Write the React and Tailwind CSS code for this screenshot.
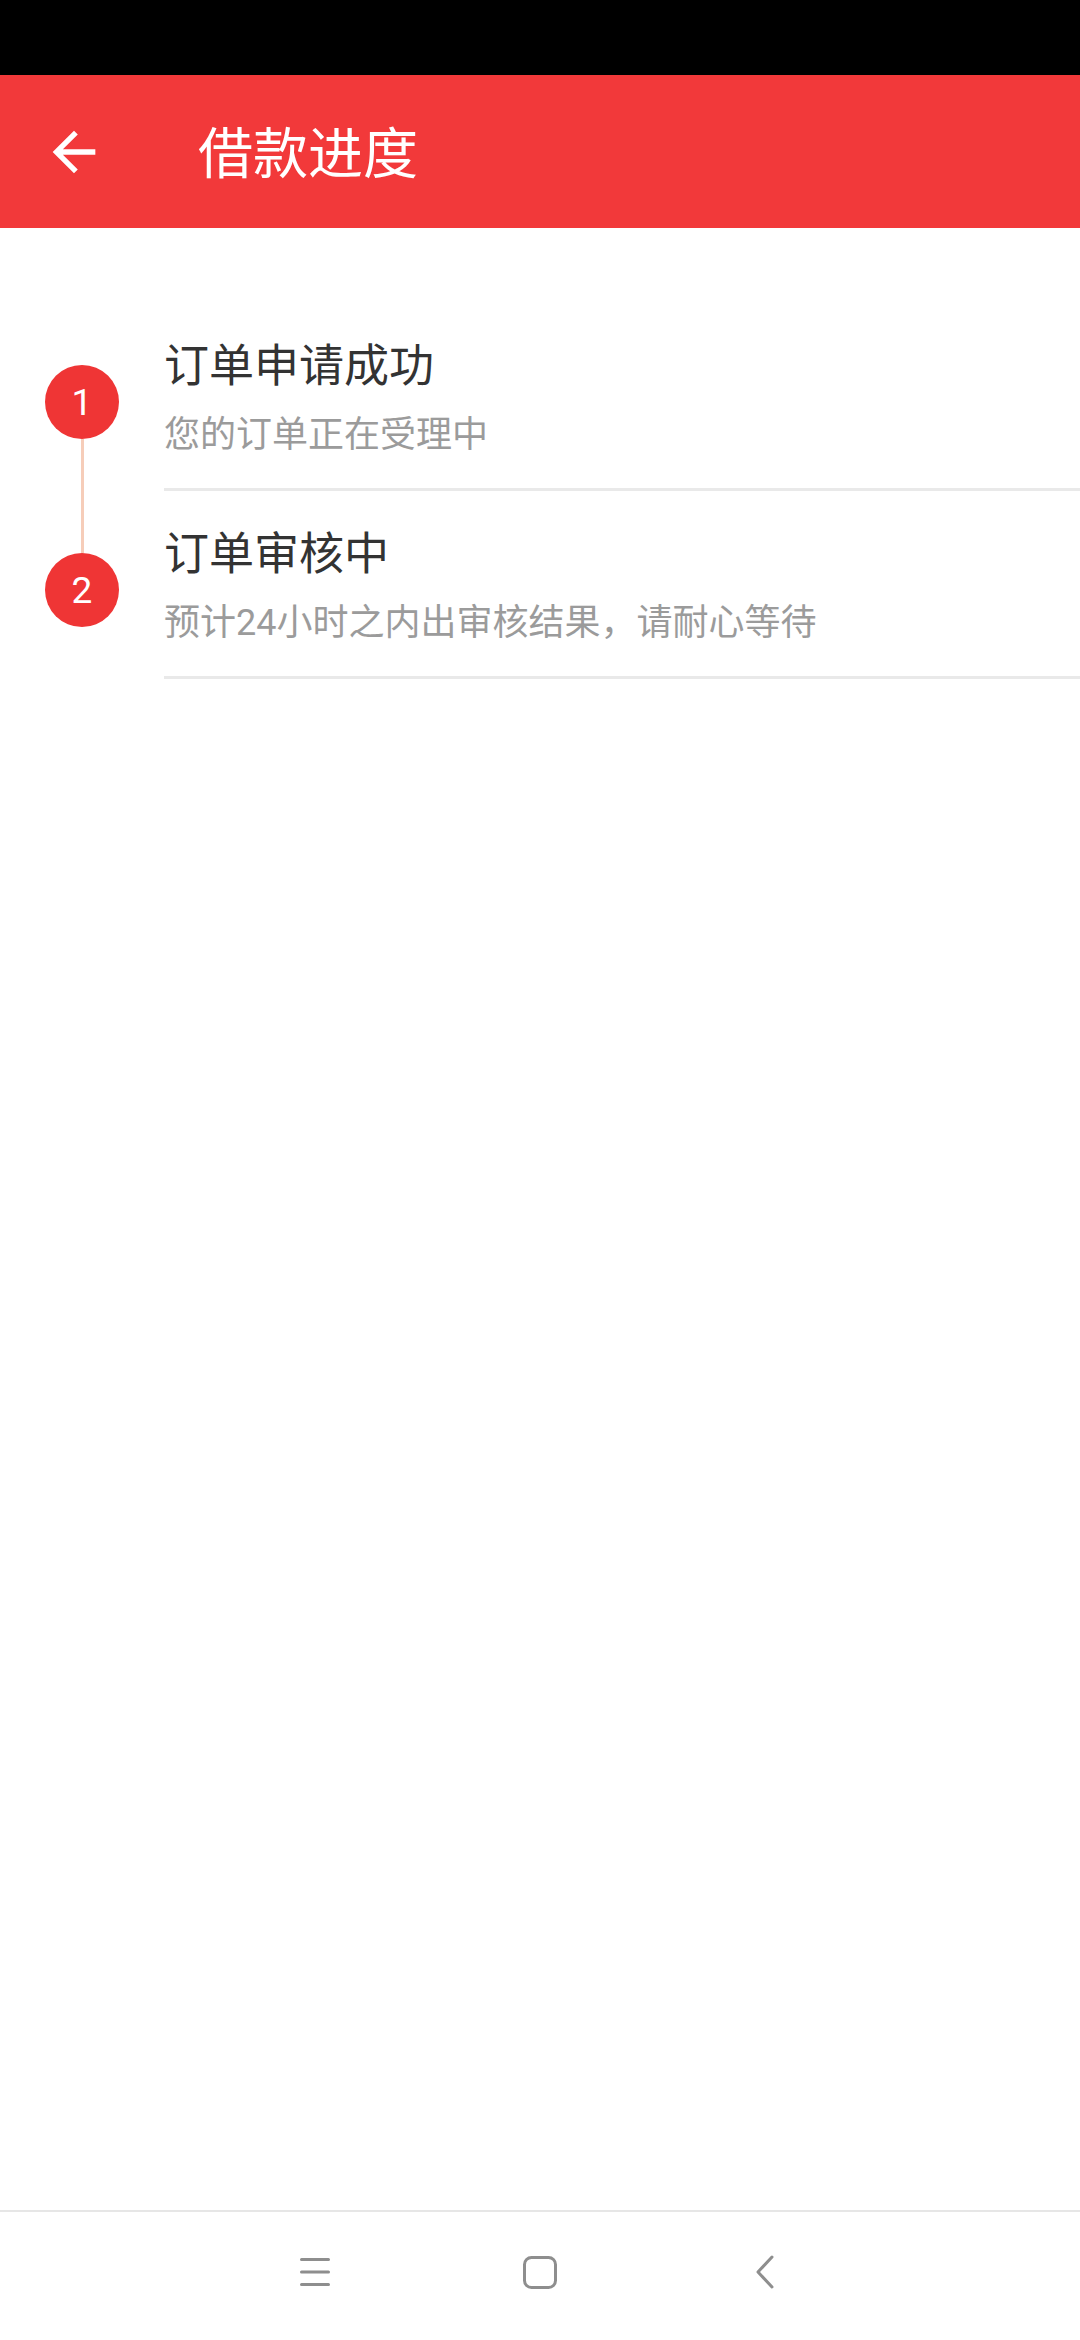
const steps = [
  { n: 1, title: '订单申请成功', desc: '您的订单正在受理中' },
  { n: 2, title: '订单审核中', desc: '预计24小时之内出审核结果，请耐心等待' },
]

function BackArrow() {
  return (
    <svg width="64" height="64" viewBox="0 0 24 24" fill="#fff">
      <path d="M20 11H7.83l5.59-5.59L12 4l-8 8 8 8 1.41-1.41L7.83 13H20v-2z" />
    </svg>
  )
}

export default function App() {
  return (
    <div className="flex h-[2340px] w-[1080px] flex-col bg-white font-['Roboto','Noto_Sans_CJK_SC',sans-serif]">
      {/* status bar */}
      <div className="h-[75px] shrink-0 bg-black" />

      {/* header */}
      <div className="flex h-[153px] shrink-0 items-center bg-[#f2393a]">
        <div className="ml-[42px] flex h-[64px] w-[64px] items-center justify-center">
          <BackArrow />
        </div>
        <h1 className="ml-[92px] mt-[6px] text-[55px] leading-none font-normal text-white">借款进度</h1>
      </div>

      {/* timeline */}
      <div className="flex-1 pt-[75px]">
        {steps.map((s, i) => (
          <div key={s.n} className="flex h-[188px]">
            <div className="flex w-[164px] shrink-0 flex-col items-center">
              <div className={`h-[62px] w-[3px] ${i === 0 ? '' : 'bg-[#f6cdb9]'}`} />
              <div className="flex h-[74px] w-[74px] shrink-0 items-center justify-center rounded-full bg-[#ef3535] text-[37px] leading-none text-white">
                {s.n}
              </div>
              <div className={`w-[3px] flex-1 ${i === steps.length - 1 ? '' : 'bg-[#f6cdb9]'}`} />
            </div>
            <div className="flex flex-1 flex-col border-b-[3px] border-[#e9e9e9] pt-[41px]">
              <div className="text-[45px] leading-none text-[#333333]">{s.title}</div>
              <div className="mt-[28px] text-[36px] leading-none text-[#9b9b9b]">{s.desc}</div>
            </div>
          </div>
        ))}
      </div>

      {/* navigation bar */}
      <div className="flex h-[130px] shrink-0 items-center border-t-2 border-[#e6e6e6] pb-[8px] pl-[202px]">
        <div className="flex w-[225px] justify-center">
          <svg width="32" height="30" viewBox="0 0 32 30" fill="none" stroke="#8e8e8e" strokeWidth="3" strokeLinecap="round">
            <path d="M2.5 2.5h27M2.5 15h27M2.5 27.5h27" />
          </svg>
        </div>
        <div className="flex w-[225px] justify-center">
          <svg width="34" height="33" viewBox="0 0 34 33" fill="none" stroke="#8e8e8e" strokeWidth="3">
            <rect x="1.5" y="1.5" width="31" height="30" rx="7" />
          </svg>
        </div>
        <div className="flex w-[225px] justify-center">
          <svg width="20" height="34" viewBox="0 0 20 34" fill="none" stroke="#8e8e8e" strokeWidth="3" strokeLinecap="round" strokeLinejoin="round">
            <path d="M17 2 3 17l14 15" />
          </svg>
        </div>
      </div>
    </div>
  )
}
